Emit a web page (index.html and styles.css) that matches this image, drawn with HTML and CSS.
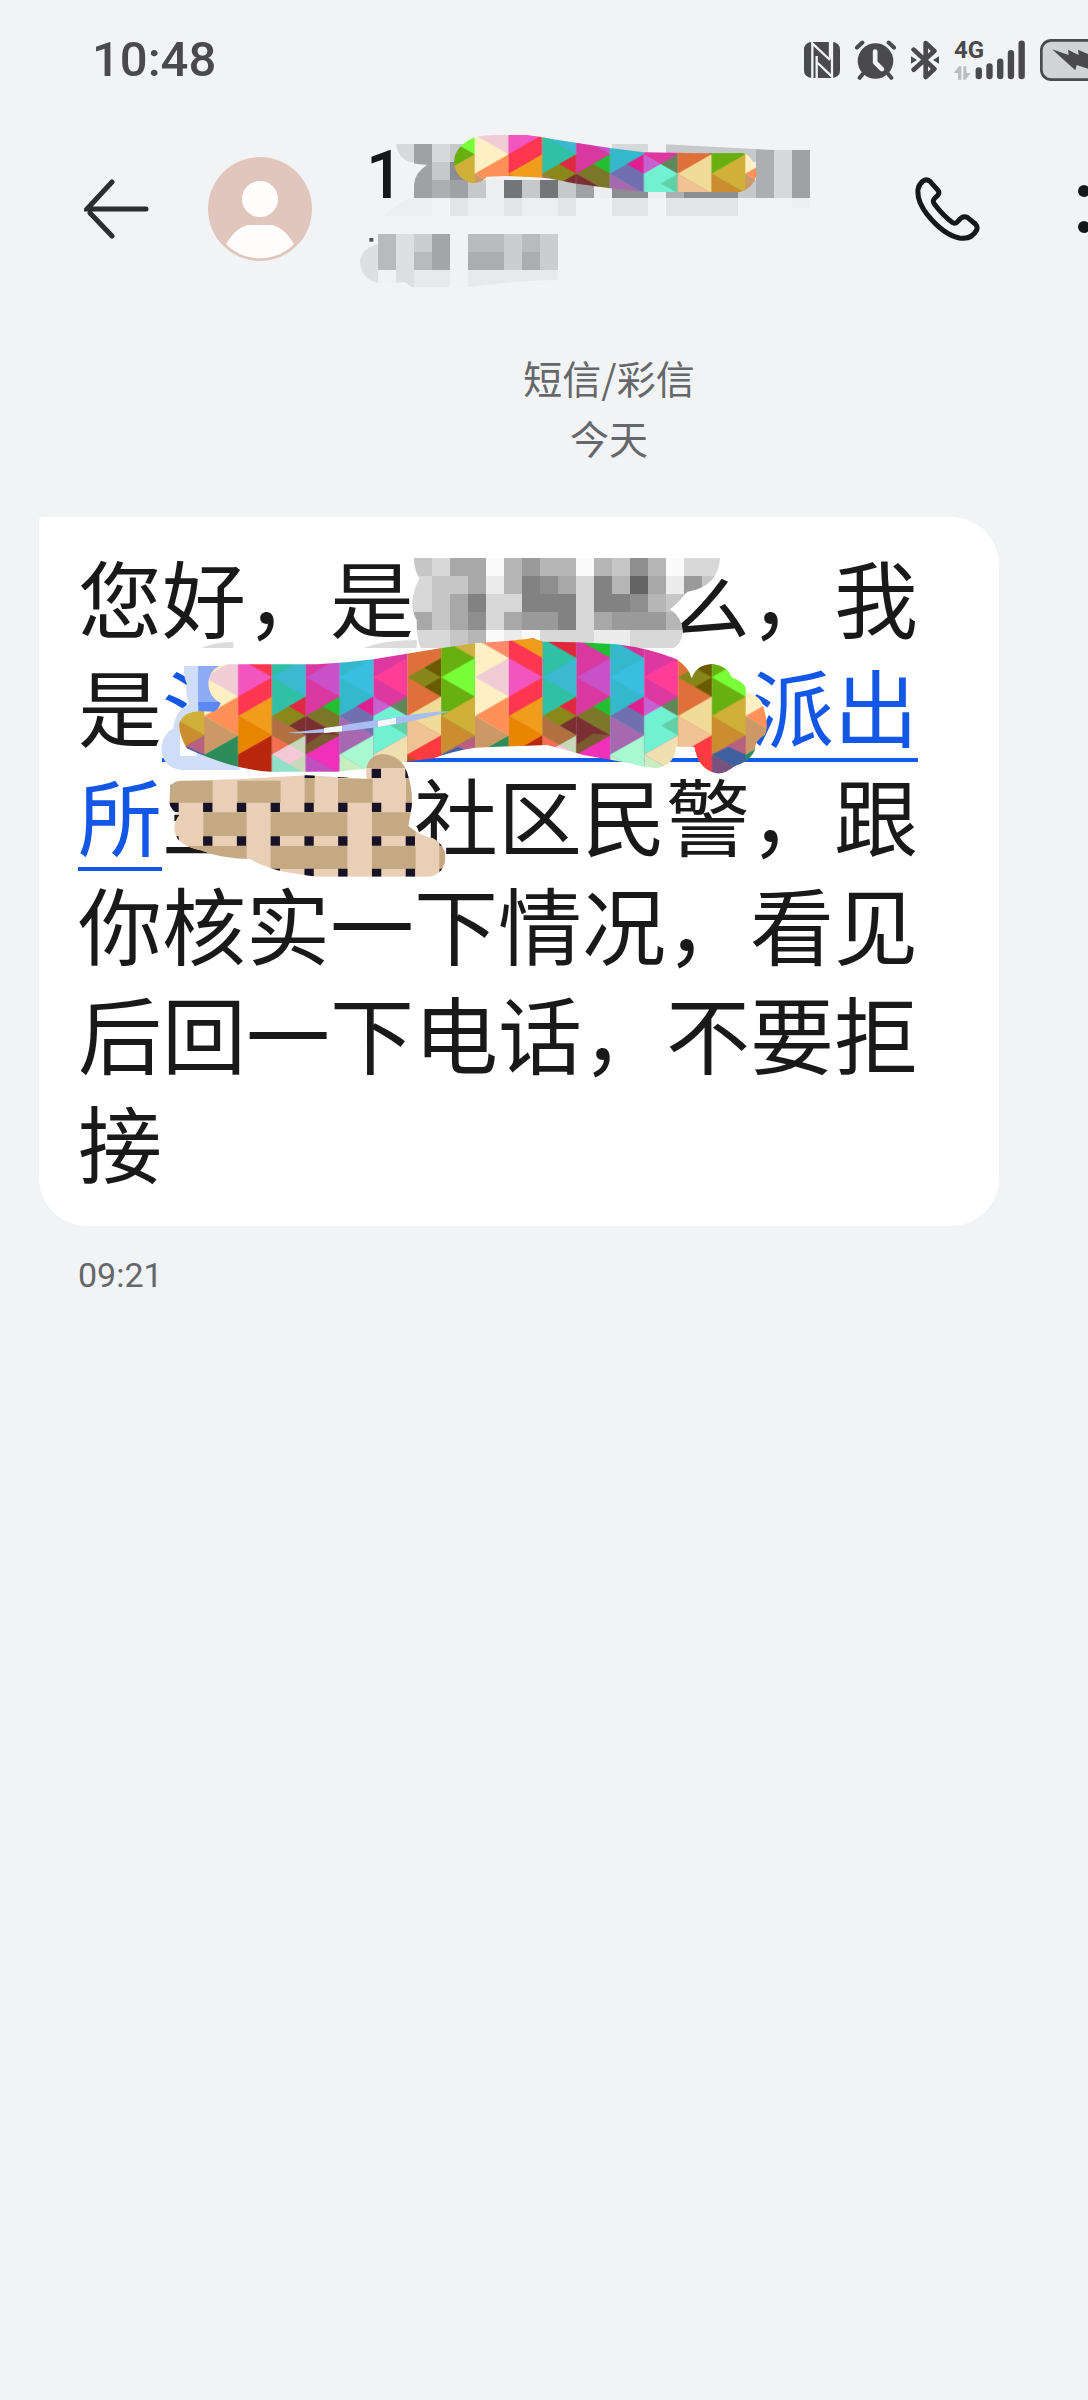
FILE: index.html
```html
<!DOCTYPE html>
<html lang="zh-CN">
<head>
<meta charset="utf-8">
<meta name="viewport" content="width=device-width, initial-scale=1">
<title>短信/彩信</title>
<link rel="stylesheet" href="styles.css">
</head>
<body>
<div class="screen">
  <div class="status">
    <span class="clock">10:48</span>
    <div class="status-icons">
      <svg class="nfc" viewBox="0 0 108 108" aria-hidden="true">
        <rect width="108" height="108" rx="22" fill="#4a4a4c"/>
        <path fill="none" stroke="#f1f3f5" stroke-width="7" d="M25 108V4L78 54M78 0V50M38 42V108M38 60L84 104V0"/>
      </svg>
      <svg class="alarm" viewBox="0 0 122 118" aria-hidden="true">
        <circle cx="61" cy="62" r="53" fill="#4a4a4c"/>
        <path fill="none" stroke="#4a4a4c" stroke-width="12" stroke-linecap="round" d="M6 22L22 7M100 7L116 22M24 100L14 112M98 100L108 112"/>
        <path fill="none" stroke="#f1f3f5" stroke-width="14" stroke-linecap="round" stroke-linejoin="round" d="M60 34V66L80 86"/>
      </svg>
      <svg class="bt" viewBox="0 0 84 118" aria-hidden="true">
        <path fill="none" stroke="#4a4a4c" stroke-width="14" stroke-linejoin="round" stroke-linecap="round" d="M8 28L70 86L44 110V8L70 32L8 88"/>
        <path fill="#4a4a4c" d="M0 48L18 59L0 70zM84 48L66 59L84 70z"/>
      </svg>
      <div class="cell">
        <span class="net">4G</span>
        <svg class="bars" viewBox="0 0 212 118" aria-hidden="true">
          <path fill="none" stroke="#4a4a4c" stroke-width="19" stroke-linecap="round" d="M74 90V107M106 78V107M138 64V107M170 39V107M202 10V107"/>
          <path fill="#bcbdbf" d="M0 98L14 78H22V118H12V98zM28 78H37V98H50L34 118H28z"/>
        </svg>
      </div>
      <svg class="battery" viewBox="0 0 144 126" aria-hidden="true">
        <rect x="4" y="4" width="230" height="118" rx="30" fill="#d2d3d5" stroke="#4a4a4c" stroke-width="8"/>
        <path fill="#4a4a4c" d="M36 31L86 48L84 32L116 48L114 32L150 48L204 90L160 82L158 94L110 78L106 94z"/>
      </svg>
    </div>
  </div>

  <header class="bar">
    <button class="icon-btn" type="button" aria-label="返回">
      <svg class="ic" viewBox="0 0 66 66" aria-hidden="true"><path fill="none" stroke="#2b2d30" stroke-width="5" stroke-linecap="round" d="M28 6L3 33H62M6 37L28 60"/></svg>
    </button>
    <svg class="avatar" viewBox="0 0 104 104" aria-hidden="true">
      <circle cx="52" cy="52" r="52" fill="#e1c6bd"/>
      <circle cx="52" cy="42" r="18" fill="#fffdfb"/>
      <path fill="#fffdfb" d="M18 87C25 75 34 68 43 68H61C70 68 79 75 86 87C68 106 36 106 18 87z"/>
    </svg>
    <div class="contact">
      <h1 class="name">1</h1>
      <svg class="name-mask" viewBox="0 0 1560 540" aria-hidden="true">
        <defs>
          <clipPath id="clipName"><path d="M168 72H960L1300 90H1410V264H1356V288H130Q170 250 222 228V195Q222 160 262 134Q175 135 168 72z"/></clipPath>
          <clipPath id="clipSub"><path d="M114 342H655V480Q520 482 385 502H215L195 486Q150 490 114 489Q62 478 60 420Q66 385 114 372z"/></clipPath>
          <pattern id="tri" patternUnits="userSpaceOnUse" x="404" y="-71" width="812" height="406" viewBox="0 0 8 7" preserveAspectRatio="none">
            <path fill="#fff0c4" d="M0 0h1v7H0z"/><path fill="#ff8a68" d="M0 0h1v1z"/><path fill="#f0cdd6" d="M0 2L1 1V3z"/><path fill="#ff9058" d="M0 4L1 3V5z"/><path fill="#cc9866" d="M0 4L1 5L0 6z"/><path fill="#2e8b5a" d="M0 6L1 5V7H0z"/>
            <path fill="#ff3650" d="M1 0h1v7H1z"/><path fill="#f09c1c" d="M1 0h1v1zM1 4L2 3V5z"/><path fill="#f255c0" d="M1 1L2 2L1 3z"/><path fill="#e88600" d="M1 4L2 5L1 6z"/><path fill="#b8260e" d="M1 6L2 5V7H1z"/>
            <path fill="#2fc0a6" d="M2 0h1v7H2z"/><path fill="#e0283c" d="M2 0h1v1z"/><path fill="#3cb8d0" d="M2 2L3 1V3z"/><path fill="#8a8818" d="M2 4L3 3V5z"/><path fill="#e02840" d="M2.5 3.5L3 3V4z"/><path fill="#7a3030" d="M2.5 4.5L3 4V5z"/><path fill="#b07040" d="M2 4L3 5L2 6z"/><path fill="#f07050" d="M2 5L2.5 5.5L2 6z"/><path fill="#c8d8b8" d="M2 6L3 5V7H2z"/><path fill="#f5c8d8" d="M2 6L2.5 5.5L3 6L2.5 6.5z"/><path fill="#90e0c8" d="M2 6L3 7H2z"/>
            <path fill="#d838a0" d="M3 0h1v7H3z"/><path fill="#1cc030" d="M3 0h1v1z"/><path fill="#c850c8" d="M3 2L4 1V3z"/><path fill="#7a7828" d="M3 4L4 3V5z"/><path fill="#22c030" d="M3.5 3.5L4 3V4z"/><path fill="#7a3030" d="M3 4L4 5L3 6z"/><path fill="#7a5a30" d="M3 6L4 5L3.5 4.9L3 5.5z"/><path fill="#f030b8" d="M3 6L4 5V7z"/><path fill="#c050c0" d="M3 6L4 7H3z"/>
            <path fill="#34b8cc" d="M4 0h1v7H4z"/><path fill="#d8309a" d="M4 0h1v1z"/><path fill="#38bfe0" d="M4 2L5 1V3z"/><path fill="#7070b0" d="M4 4L5 3V5z"/><path fill="#e02090" d="M4.5 3.5L5 3V4z"/><path fill="#a868b0" d="M4 4L5 5L4 6z"/><path fill="#a8f8d0" d="M4 6L5 5V7z"/><path fill="#c8eec0" d="M4 6L5 7H4z"/>
            <path fill="#dc38a0" d="M5 0h1v7H5z"/><path fill="#ff3c98" d="M5 2L6 1V3z"/><path fill="#c860d0" d="M5 3L6 4H5z"/><path fill="#5e8858" d="M5.5 3.5L6 3V4z"/><path fill="#70f2d2" d="M5 4L5.5 3.5L6 4V5L5 6z"/><path fill="#60d0a8" d="M5.5 4.5L6 4V5z"/><path fill="#f0e0b0" d="M5 6L6 5V7z"/><path fill="#c8eec0" d="M5 6L6 7H5z"/>
            <path fill="#e0703a" d="M6 0h1v7H6z"/><path fill="#858818" d="M6 2L7 1V3z"/><path fill="#6a5a00" d="M6.5 2.5L7 2V3zM6.5 1.5L7 1V2z"/><path fill="#f0dc98" d="M6 4L7 3V5z"/><path fill="#f0c294" d="M6 4L7 5L6 6z"/><path fill="#ff3a40" d="M6 6L7 5V7z"/><path fill="#c84820" d="M6 6L7 7H6z"/>
            <path fill="#68b010" d="M7 0h1v7H7z"/><path fill="#d0b040" d="M7 0h1v1z"/><path fill="#78ff38" d="M7 2L8 1V3z"/><path fill="#d0b038" d="M7 4L8 3V5z"/><path fill="#cc8c30" d="M7 4L8 5L7 6z"/><path fill="#b86080" d="M7 6L8 5V6z"/><path fill="#4060a0" d="M7 6L7.5 5.6L8 6V7z"/><path fill="#7a5080" d="M7 6L8 7H7z"/>
          </pattern>
          <pattern id="triWide" href="#tri" x="163" y="56"/>
        </defs>
        <path fill="#15181b" d="M254 150L262 134H278V142z"/>
        <g clip-path="url(#clipName)">
          <g transform="translate(168 99) scale(54)" fill="none">
            <path stroke="#edeeef" d="M-1 3h3M4 3h2M7 3h2M11 2h1M14 2h1M5 2h1M22 3h1"/>
            <path stroke="#e3e4e6" d="M3 3h1M6 3h1M9 3h1M12 3h2M15 3h4"/>
            <path stroke="#d6d8da" d="M0 0h1M2 0h1M12 0h2M21 0h2M21 1h1M21 2h1"/>
            <path stroke="#c6c8ca" d="M3 0h3M2 1h1M7 2h1M9 2h1M15 0h5M4 2h1M19 2h1"/>
            <path stroke="#adaeb1" d="M2 2h1M15 2h1M20 0h1M20 1h1M20 2h1"/>
            <path stroke="#a0a1a4" d="M1 0h1M1 1h1M1 2h1M3 2h1M10 2h1M22 0h1M22 1h1M22 2h1"/>
            <path stroke="#8c8d90" d="M3 1h1M12 2h2M16 2h3"/>
            <path stroke="#747578" d="M6 2h1M8 2h1"/>
          </g>
        </g>
        <path fill="#505255" d="M88 354h12v11h-12z"/>
        <g clip-path="url(#clipSub)">
          <g transform="translate(60 369) scale(54)" fill="none">
            <path stroke="#e8e9eb" d="M0 2h11"/>
            <path stroke="#dddfe1" d="M0 0h1M2 0h1M0 1h1M2 1h1M0 2h1M2 2h1"/>
            <path stroke="#f1f2f4" d="M5 0h1M5 1h1M5 2h1M1 2h1"/>
            <path stroke="#cbcdcf" d="M3 0h1M8 0h1M10 0h1M8 1h1M10 1h1"/>
            <path stroke="#b8babc" d="M1 0h1M1 1h1M6 0h2M9 0h1M3 1h1"/>
            <path stroke="#acadb0" d="M6 1h2M9 1h1"/>
            <path stroke="#a4a5a8" d="M4 0h1M4 1h1"/>
          </g>
        </g>
        <path fill="url(#tri)" d="M342 130Q340 80 404 52Q430 45 470 45H560Q590 48 640 58L810 84L912 97L1090 100L1215 99Q1250 125 1250 165Q1240 205 1200 216H920L810 205L700 190Q640 176 610 173L500 168L440 170Q430 185 400 190Q350 180 342 130z"/>
      </svg>
    </div>
    <button class="icon-btn" type="button" aria-label="拨打电话">
      <svg class="ic" viewBox="0 0 198 198" aria-hidden="true"><path fill="none" stroke="#15181b" stroke-width="15" stroke-linejoin="round" d="M27 15Q37 8 48 16L72 43Q78 51 70 59Q52 72 61 84Q88 120 116 140Q125 145 132 136Q144 118 160 124L184 144Q192 152 188 162Q172 192 136 186Q88 176 40 116Q8 74 12 40Q14 26 27 15z"/></svg>
    </button>
    <button class="icon-btn menu" type="button" aria-label="更多">
      <svg class="dots" viewBox="0 0 10 54" aria-hidden="true"><g fill="#15181b"><circle cx="6" cy="9" r="6"/><circle cx="6" cy="45" r="6"/></g></svg>
    </button>
  </header>

  <main class="thread">
    <p class="notice">短信/彩信<br>今天</p>
    <article class="bubble">
      <p class="text">您好，是<span class="blank">&#x3000;&#x3000;&#x3000;</span>么，我是<a class="place" href="#place">氵&#x3000;&#x3000;&#x3000;&#x3000;&#x3000;&#x3000;派出所</a>王<span class="blank">&#x3000;&#x3000;</span>社区民警，跟你核实一下情况，看见后回一下电话，不要拒接</p>
      <svg class="text-mask" viewBox="0 0 1920 1080" aria-hidden="true">
        <defs>
          <clipPath id="clipWho"><path d="M792 84H1710Q1706 170 1610 186Q1590 215 1560 238Q1600 265 1598 310Q1592 345 1570 354H812Q800 330 800 270Q770 220 808 145Q792 120 792 84z"/></clipPath>
          <clipPath id="clipWeave"><path d="M60 510Q62 485 90 482L260 478L470 466L650 476Q640 410 695 402Q760 405 775 470Q788 510 785 560L775 618Q815 650 850 655Q885 675 886 710Q885 760 840 770H500Q420 760 380 750Q330 735 300 717Q210 715 150 690Q115 685 85 660Q60 620 88 585Q62 570 58 550z"/></clipPath>
        </defs>
        <path fill="#dcdcdc" d="M155 354Q190 336 250 336V354zM640 354Q700 330 800 330V354z"/>
        <g clip-path="url(#clipWho)">
          <path fill="#fff" d="M780 84h940v280H780z"/>
          <g transform="translate(792 111) scale(54)" fill="none">
            <path stroke="#fafafa" d="M4 0h1M9 0h1M14 0h1M4 4h1M6 4h1"/>
            <path stroke="#ececec" d="M4 1h1M14 1h1M5 4h1M10 4h2"/>
            <path stroke="#d8d8d8" d="M1 0h1M15 0h2M0 1h1M9 1h1M0 2h1M-1 2h1M4 2h2M9 2h1M4 3h1M9 3h1M0 4h2M7 4h3M12 4h3M15 3h1"/>
            <path stroke="#c6c6c6" d="M0 0h1M11 0h1M1 1h2M16 1h1M1 2h1M14 2h2M1 3h1M2 4h1"/>
            <path stroke="#b6b6b6" d="M5 0h1M7 0h2M10 0h1M13 0h1M5 1h1M11 1h1M13 2h1M14 3h1M3 4h1"/>
            <path stroke="#a8a8a8" d="M2 0h2M3 1h1M8 1h1M13 1h1M2 2h1M2 3h1M5 3h1M10 3h1M0 3h1"/>
            <path stroke="#9a9a9a" d="M6 0h1M15 1h1M6 3h2M11 3h3"/>
            <path stroke="#8e8e8e" d="M12 0h1M7 1h1M12 2h1M3 3h1"/>
            <path stroke="#828282" d="M6 1h1M10 1h1M3 2h1M6 2h3M10 2h2M8 3h1"/>
            <path stroke="#646464" d="M12 1h1"/>
          </g>
        </g>
        <g transform="translate(0 270)">
          <path fill="#d0ddf9" d="M102 138H220V280L270 450H90Q34 440 34 380Q40 340 70 325Q75 270 118 252Q105 225 110 190Q100 170 102 138z"/>
          <path fill="#8eabf5" d="M144 138H220V280H144z"/>
          <path fill="#5a88f8" d="M144 246H230V290H150z"/>
          <path fill="#fff" d="M90 340H140V408H90z"/>
          <path fill="url(#triWide)" d="M175 190Q178 140 230 133H500Q590 128 670 118L870 85L975 70L1080 62L1150 55L1180 65L1280 67L1400 73Q1500 85 1580 118Q1618 145 1625 175Q1640 132 1690 132Q1735 140 1745 172Q1790 190 1790 215Q1835 230 1840 260Q1858 320 1845 345Q1815 360 1815 390Q1800 425 1755 438Q1720 465 1700 460Q1645 450 1633 380H1578Q1575 435 1520 445Q1470 440 1440 430L1300 405Q1230 385 1190 375L975 383Q900 395 850 415L770 425L640 447L560 455L365 455Q250 450 110 385Q85 340 88 310Q100 272 160 274L190 275Q205 270 212 250Q175 230 175 190z"/>
          <path fill="#a9bdf0" d="M412 338Q520 330 600 312L740 292Q830 275 900 274Q800 305 680 322Q520 345 412 338z"/>
          <path fill="#f6f8fd" d="M522 324L576 317V334L522 339zM684 303L738 293V311L684 321z"/>
          <g clip-path="url(#clipWeave)">
            <path fill="#e8cfb5" d="M50 395H900V780H50z"/>
            <path fill="#c4a983" d="M50 482H188V548H50zM262 482H392V548H262zM464 460H494V548H464zM564 476H668V548H564zM640 400H797V444H640zM768 460H790V548H768zM160 577H290V648H160zM362 577H592V648H362zM666 577H797V648H666zM100 678H290V720H100zM362 678H592V747H362zM666 678H797V747H666zM868 678H890V747H868z"/>
            <path fill="none" stroke="#171226" stroke-width="28" stroke-dasharray="28 73.3" d="M58 562H900M58 663H900M362 760H900M665 460H700"/>
            <path fill="#171226" d="M464 464h30v10h-30zM564 464h30v10h-30zM766 446h30v28h-30z"/>
          </g>
        </g>
      </svg>
    </article>
    <time class="sent" datetime="09:21">09:21</time>
  </main>
</div>
</body>
</html>
```
FILE: styles.css
```css
* {
  box-sizing: border-box;
}

body {
  margin: 0;
  font-family: Roboto, "Noto Sans CJK SC", sans-serif;
  color: #191919;
  background: #f1f3f5;
}

svg {
  display: block;
}

.screen {
  min-height: 100vh;
}

.status {
  display: flex;
  align-items: center;
  justify-content: space-between;
  height: 120px;
  padding-left: 92px;
}

.clock {
  font-size: 49px;
  font-weight: 500;
  line-height: 60px;
  color: #4a4a4c;
}

.status-icons {
  display: flex;
  align-items: center;
  gap: 15px;
}

.nfc {
  width: 36px;
  height: 36px;
}

.alarm {
  width: 41px;
  height: 40px;
}

.bt {
  width: 28px;
  height: 40px;
}

.cell {
  position: relative;
}

.net {
  position: absolute;
  top: 0;
  left: 0;
  font-size: 24px;
  font-weight: 700;
  line-height: 20px;
  color: #4a4a4c;
}

.bars {
  width: 71px;
  height: 40px;
}

.battery {
  width: 48px;
  height: 42px;
}

.bar {
  display: flex;
  align-items: center;
  height: 178px;
  padding-left: 84px;
}

.icon-btn {
  flex: none;
  padding: 0;
  border: 0;
  background: none;
}

.ic {
  width: 66px;
  height: 66px;
}

.menu {
  margin-left: 98px;
}

.dots {
  width: 10px;
  height: 54px;
}

.avatar {
  flex: none;
  width: 104px;
  height: 104px;
  margin: 0 54px 0 58px;
}

.contact {
  position: relative;
  flex: 1;
  align-self: stretch;
  padding-top: 16px;
}

.name {
  margin: 0;
  font-size: 66px;
  font-weight: 500;
  line-height: 80px;
  color: #15181b;
}

.name-mask {
  position: absolute;
  top: 0;
  left: -26px;
  width: 520px;
  height: 180px;
}

.thread {
  padding: 49px 39px 48px;
}

.notice {
  margin: 0 -39px 50px 91px;
  font-family: "Noto Sans CJK SC", sans-serif;
  font-size: 39px;
  line-height: 60px;
  text-align: center;
  color: #65676a;
}

.bubble {
  position: relative;
  max-width: 960px;
  padding: 24px 39px 31px;
  border-radius: 4px 48px 48px 48px;
  background: #fff;
}

.text {
  margin: 0;
  font-family: "Noto Sans CJK SC", sans-serif;
  font-size: 84px;
  line-height: 109px;
}

.place {
  color: #1257e6;
  text-decoration: underline;
  text-decoration-thickness: 4px;
  text-decoration-skip-ink: none;
  text-underline-offset: 17px;
}

.text-mask {
  position: absolute;
  top: 13px;
  left: 111px;
  width: 640px;
  height: 360px;
}

.sent {
  display: block;
  margin: 29px 39px 0;
  font-size: 34px;
  line-height: 40px;
  color: #65676a;
}
```
